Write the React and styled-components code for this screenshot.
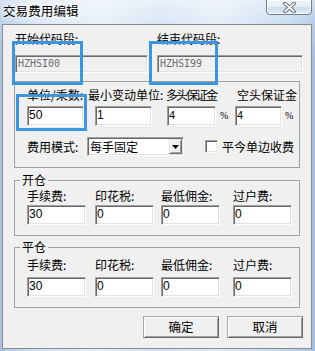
import React from "react";
import styled, { createGlobalStyle } from "styled-components";

const Global = createGlobalStyle`
  html, body { margin: 0; padding: 0; background: #c8dcf0; }
  body { width: 315px; height: 351px; overflow: hidden; }
  *, *::before, *::after { box-sizing: border-box; }
`;

const CJK = `"Noto Sans CJK SC", "Microsoft YaHei", sans-serif`;

const Window = styled.div`
  position: relative;
  width: 315px;
  height: 351px;
  overflow: hidden;
  font-family: ${CJK};
  color: #000;
  display: flex;
  flex-direction: column;
  background:
    linear-gradient(180deg, rgba(255,255,255,0.5) 0px, rgba(255,255,255,0.2) 24px, rgba(255,255,255,0) 60px),
    linear-gradient(90deg, #a6c3e3 0px, #cbdff2 30px, #e3eef8 100px, #cfe0f1 160px, #dfeaf6 220px, #bdd4ec 290px, #a2bfe1 315px);
`;

const TitleBar = styled.div`
  height: 24px;
  flex: none;
  display: flex;
  align-items: flex-start;
  padding: 3px 0 0 3px;
`;

const Title = styled.div`
  font-size: 12.5px;
  line-height: 15px;
  letter-spacing: 0.1px;
  text-shadow: 0 0 5px #fff, 0 0 9px #fff, 0 0 12px #fff;
`;

const CloseButton = styled.div`
  position: absolute;
  top: -1px;
  right: 3px;
  width: 46px;
  height: 16px;
  border: 1px solid #6e7d90;
  border-radius: 0 0 4px 4px;
  background: linear-gradient(180deg, #f3f7fb 0%, #e2ebf4 50%, #cfdceb 51%, #e4ecf5 100%);
  box-shadow: inset 0 0 0 1px rgba(255,255,255,0.7);
  display: flex;
  align-items: center;
  justify-content: center;
`;

const Client = styled.div`
  margin-left: 2px;
  width: 310px;
  height: 325px;
  border: 1px solid #8a8c8e;
  background: #f0f0f0;
  display: flex;
  flex-direction: column;
`;

const Label = styled.div`
  font-size: 12px;
  line-height: 14px;
  white-space: nowrap;
  letter-spacing: ${(p) => p.$ls || 0}px;
`;

const sunken = `
  border-style: solid;
  border-width: 1px;
  border-color: #a0a0a0 #ffffff #ffffff #a0a0a0;
  box-shadow: inset 1px 1px 0 #696969, inset -1px -1px 0 #e3e3e3;
`;

const CodeRow = styled.div`
  display: flex;
  gap: 9px;
  padding: 7px 0 0 12px;
`;

const CodeCol = styled.div`
  display: flex;
  flex-direction: column;
  width: ${(p) => p.$w}px;
`;

const CodeField = styled.div`
  margin-top: 9px;
  height: 18px;
  ${sunken}
  background: #f0f0f0;
  color: #6d6d6d;
  font-family: "DejaVu Sans Mono", "Liberation Mono", monospace;
  font-size: 10px;
  line-height: 16px;
  padding-left: 2px;
`;

const Panel = styled.div`
  margin: 8px 0 0 11px;
  width: 286px;
  height: 87px;
  border: 1px solid #a0a0a0;
  padding: 6px 0 0 12px;
`;

const LabelGrid = styled.div`
  display: grid;
  grid-template-columns: ${(p) => p.$cols};
`;

const InputRow = styled.div`
  margin-top: 4px;
  display: flex;
  align-items: center;
`;

const TextBox = styled.div`
  width: ${(p) => p.$w}px;
  height: 20px;
  margin-left: ${(p) => p.$ml || 0}px;
  margin-top: ${(p) => p.$mt || 0}px;
  ${sunken}
  background: #fff;
  font-family: "Liberation Sans", Arial, sans-serif;
  font-size: ${(p) => p.$fs || 12}px;
  line-height: 17px;
  padding-left: 1px;
`;

const Percent = styled.span`
  width: ${(p) => p.$w}px;
  padding-left: ${(p) => p.$pl}px;
  font-family: "Liberation Serif", serif;
  font-size: 10px;
  line-height: 14px;
`;

const ModeRow = styled.div`
  margin-top: 11px;
  display: flex;
  align-items: center;
  height: 19px;
`;

const ModeLabel = styled(Label)`
  width: 60px;
`;

const Select = styled.div`
  width: 97px;
  height: 19px;
  ${sunken}
  background: #fff;
  display: flex;
  align-items: stretch;
  padding: 1px;
`;

const SelectText = styled.div`
  flex: 1;
  font-size: 12px;
  line-height: 15px;
  padding-left: 1px;
`;

const ArrowBtn = styled.div`
  width: 13px;
  background: #f0f0f0;
  border-style: solid;
  border-width: 1px;
  border-color: #e3e3e3 #696969 #696969 #e3e3e3;
  box-shadow: inset 1px 1px 0 #fff, inset -1px -1px 0 #a0a0a0;
  display: flex;
  align-items: center;
  justify-content: center;
`;

const Check = styled.div`
  width: 13px;
  height: 13px;
  margin-left: 21px;
  ${sunken}
  background: #fff;
`;

const CheckLabel = styled(Label)`
  margin-left: 4px;
`;

const Group = styled.fieldset`
  margin: ${(p) => p.$mt}px 0 0 11px;
  width: 286px;
  min-width: 0;
  border: 1px solid #a0a0a0;
  padding: 0;
`;

const Legend = styled.legend`
  margin-left: 5px;
  padding: 0 2px;
  font-size: 12px;
  line-height: 14px;
`;

const GroupBody = styled.div`
  padding: ${(p) => p.$pt}px 0 10px 12px;
  display: grid;
  grid-template-columns: 68px 66px 72px auto;
`;

const FeeCol = styled.div`
  display: flex;
  flex-direction: column;
`;

const ButtonRow = styled.div`
  margin-top: 8px;
  display: flex;
  justify-content: flex-end;
  gap: 8px;
  padding-right: 8px;
`;

const Button = styled.div`
  width: 76px;
  height: 22px;
  background: #f0f0f0;
  border-style: solid;
  border-width: 1px;
  border-color: #a8a8a8 #696969 #696969 #a8a8a8;
  box-shadow: inset 1px 1px 0 #fff, inset -1px -1px 0 #a0a0a0;
  font-size: 12.5px;
  line-height: 19px;
  text-align: center;
`;

const Mark = styled.div`
  position: absolute;
  left: ${(p) => p.$x}px;
  top: ${(p) => p.$y}px;
  width: ${(p) => p.$w}px;
  height: ${(p) => p.$h}px;
  border: 3px solid #3b95df;
  pointer-events: none;
`;

const fees = [
  { label: "手续费:", w: 59 },
  { label: "印花税:", w: 59 },
  { label: "最低佣金:", w: 59 },
  { label: "过户费:", w: 59 },
];

function FeeGroup({ title, values, mt, pt, inputMt }) {
  return (
    <Group $mt={mt}>
      <Legend>{title}</Legend>
      <GroupBody $pt={pt}>
        {fees.map((f, i) => (
          <FeeCol key={f.label}>
            <Label>{f.label}</Label>
            <TextBox $w={f.w} $mt={inputMt}>{values[i]}</TextBox>
          </FeeCol>
        ))}
      </GroupBody>
    </Group>
  );
}

export default function App() {
  return (
    <>
      <Global />
      <Window>
        <TitleBar>
          <Title>交易费用编辑</Title>
        </TitleBar>
        <CloseButton>
          <svg width="15" height="11" viewBox="0 0 15 11">
            <path d="M3 1.5 L12 9.5 M12 1.5 L3 9.5" stroke="#4a5563" strokeWidth="3.6" strokeLinecap="round" />
            <path d="M3 1.5 L12 9.5 M12 1.5 L3 9.5" stroke="#ffffff" strokeWidth="1.8" strokeLinecap="round" />
          </svg>
        </CloseButton>
        <Client>
          <CodeRow>
            <CodeCol $w={133}>
              <Label>开始代码段:</Label>
              <CodeField>HZHSI00</CodeField>
            </CodeCol>
            <CodeCol $w={146}>
              <Label>结束代码段:</Label>
              <CodeField>HZHSI99</CodeField>
            </CodeCol>
          </CodeRow>

          <Panel>
            <LabelGrid $cols="61px 78px 71px auto">
              <Label>单位/乘数:</Label>
              <Label>最小变动单位:</Label>
              <Label $ls={-2}>多头保证金</Label>
              <Label>空头保证金</Label>
            </LabelGrid>
            <InputRow>
              <TextBox $w={57}>50</TextBox>
              <TextBox $w={57} $ml={11}>1</TextBox>
              <TextBox $w={49} $ml={15} $fs={11}>4</TextBox>
              <Percent $w={19} $pl={4}>%</Percent>
              <TextBox $w={47} $fs={11}>4</TextBox>
              <Percent $w={12} $pl={3}>%</Percent>
            </InputRow>
            <ModeRow>
              <ModeLabel>费用模式:</ModeLabel>
              <Select>
                <SelectText>每手固定</SelectText>
                <ArrowBtn>
                  <svg width="7" height="4" viewBox="0 0 7 4">
                    <path d="M0 0 H7 L3.5 4 Z" fill="#000" />
                  </svg>
                </ArrowBtn>
              </Select>
              <Check />
              <CheckLabel>平今单边收费</CheckLabel>
            </ModeRow>
          </Panel>

          <FeeGroup title="开仓" values={["30", "0", "0", "0"]} mt={5} pt={2} inputMt={2} />
          <FeeGroup title="平仓" values={["30", "0", "0", "0"]} mt={4} pt={4} inputMt={5} />

          <ButtonRow>
            <Button>确定</Button>
            <Button>取消</Button>
          </ButtonRow>
        </Client>

        <Mark $x={12} $y={41} $w={71} $h={44} />
        <Mark $x={149} $y={41} $w={69} $h={44} />
        <Mark $x={16} $y={94} $w={71} $h={37} />
      </Window>
    </>
  );
}
